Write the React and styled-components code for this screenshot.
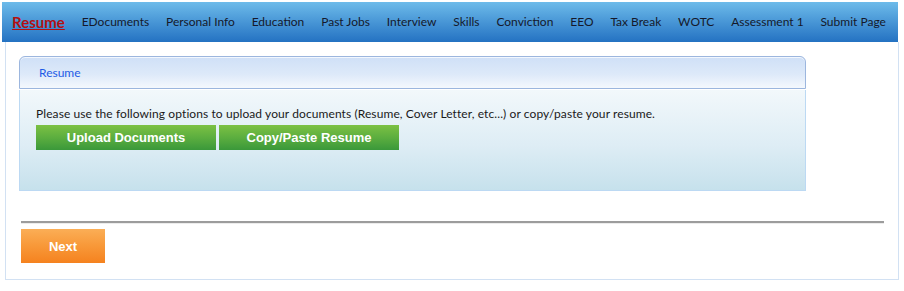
import styled, { createGlobalStyle } from "styled-components";

const GlobalStyle = createGlobalStyle`
  html, body {
    margin: 0;
    padding: 0;
    background: #ffffff;
  }
  body {
    font-family: Lato, "Open Sans", "Liberation Sans", sans-serif;
  }
`;

const NavBar = styled.nav`
  margin: 2px 6px 0 2px;
  height: 40px;
  display: flex;
  align-items: center;
  justify-content: space-between;
  padding: 0 12px 0 10px;
  background: linear-gradient(#6dbbea 0%, #4896d6 50%, #2472c2 100%);
  box-sizing: border-box;
`;

const NavItem = styled.a`
  font-size: ${(p) => (p.$active ? "15px" : "12px")};
  font-weight: ${(p) => (p.$active ? 700 : 400)};
  color: ${(p) => (p.$active ? "#b40f12" : "#15192b")};
  text-decoration: ${(p) => (p.$active ? "underline" : "none")};
  line-height: 16px;
  padding-bottom: 1px;
  white-space: nowrap;
  cursor: pointer;
`;

const Frame = styled.div`
  margin: 0 5px;
  height: 238px;
  border: 1px solid #d2e1f3;
  border-top: none;
  padding: 14px 0 0 13px;
  box-sizing: border-box;
`;

const Panel = styled.section`
  width: 787px;
`;

const PanelHeader = styled.div`
  height: 33px;
  box-sizing: border-box;
  border: 1px solid #9cb6de;
  border-radius: 6px 6px 0 0;
  background: linear-gradient(#cfe0f7 0%, #dde9f9 55%, #f4f8fd 100%);
  display: flex;
  align-items: center;
  padding: 0 0 0 19px;
  font-size: 12px;
  color: #1f5be6;
  box-shadow: inset 0 1px 0 #f2f7fe;
`;

const PanelBody = styled.div`
  margin-top: 1px;
  height: 101px;
  box-sizing: border-box;
  border: 1px solid #bcd9f3;
  border-top: none;
  background: linear-gradient(#f2f8fb 0%, #deedf5 55%, #c6e1ec 100%);
  padding: 16px 0 0 16px;
`;

const Intro = styled.p`
  margin: 0 0 3px 0;
  font-size: 12px;
  letter-spacing: 0.09px;
  line-height: 16px;
  color: #1a1a1a;
`;

const ButtonRow = styled.div`
  display: flex;
  gap: 3px;
`;

const GreenButton = styled.button`
  width: 180px;
  height: 25px;
  border: none;
  padding: 0;
  background: linear-gradient(#7cc143 0%, #5cae3f 50%, #3a983a 100%);
  color: #ffffff;
  font-family: "Liberation Sans", Arial, sans-serif;
  font-weight: 700;
  font-size: 13px;
  cursor: pointer;
`;

const Divider = styled.hr`
  margin: 30px 14px 0 2px;
  height: 2px;
  border: none;
  background: #9c9c9c;
  box-shadow: 0 1px 0 #ececec;
`;

const NextButton = styled.button`
  margin: 6px 0 0 2px;
  width: 84px;
  height: 34px;
  border: none;
  padding: 0;
  background: linear-gradient(#fbae56 0%, #f89838 50%, #f5821f 100%);
  color: #ffffff;
  font-family: "Liberation Sans", Arial, sans-serif;
  font-weight: 700;
  font-size: 13px;
  cursor: pointer;
`;

const tabs = [
  "EDocuments",
  "Personal Info",
  "Education",
  "Past Jobs",
  "Interview",
  "Skills",
  "Conviction",
  "EEO",
  "Tax Break",
  "WOTC",
  "Assessment 1",
  "Submit Page",
];

export default function App() {
  return (
    <>
      <GlobalStyle />
      <NavBar>
        <NavItem $active>Resume</NavItem>
        {tabs.map((t) => (
          <NavItem key={t}>{t}</NavItem>
        ))}
      </NavBar>
      <Frame>
        <Panel>
          <PanelHeader>Resume</PanelHeader>
          <PanelBody>
            <Intro>
              Please use the following options to upload your documents (Resume, Cover Letter, etc...) or copy/paste your resume.
            </Intro>
            <ButtonRow>
              <GreenButton>Upload Documents</GreenButton>
              <GreenButton>Copy/Paste Resume</GreenButton>
            </ButtonRow>
          </PanelBody>
        </Panel>
        <Divider />
        <NextButton>Next</NextButton>
      </Frame>
    </>
  );
}
